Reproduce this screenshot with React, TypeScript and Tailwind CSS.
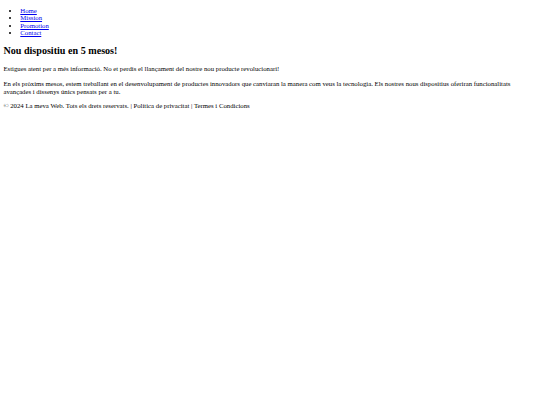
const links = ['Home', 'Mission', 'Promotion', 'Contact']

export default function App() {
  return (
    <div className="min-h-[405px] bg-white px-[3.4px] pt-[6.75px] text-[6.75px] leading-[7.5px] text-black [font-family:'Liberation_Serif','Times_New_Roman',serif]">
      <nav>
        <ul className="list-disc pl-[16.9px]">
          {links.map(l => (
            <li key={l}>
              <a href="#" className="text-[#0000ee] underline">{l}</a>
            </li>
          ))}
        </ul>
      </nav>

      <main className="mt-[7.8px]">
        <h2 className="text-[10.125px] leading-[11.6px] font-bold">Nou dispositiu en 5 mesos!</h2>
        <p className="mt-[9.1px]">
          Estigues atent per a més informació. No et perdis el llançament del nostre nou producte revolucionari!
        </p>
        <p className="mt-[7.5px]">
          En els pròxims mesos, estem treballant en el desenvolupament de productes innovadors que canviaran la manera com veus la tecnologia. Els nostres nous dispositius oferiran funcionalitats avançades i dissenys únics pensats per a tu.
        </p>
      </main>

      <footer className="mt-[7px]">
        <p>© 2024 La meva Web. Tots els drets reservats. | Política de privacitat | Termes i Condicions</p>
      </footer>
    </div>
  )
}
